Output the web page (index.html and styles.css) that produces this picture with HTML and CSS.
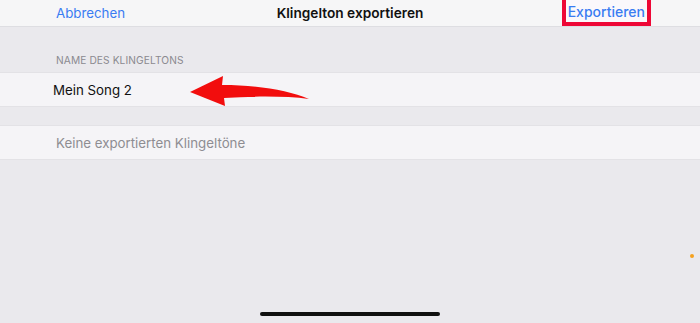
FILE: index.html
```html
<!DOCTYPE html>
<html lang="de">
<head>
<meta charset="utf-8">
<link rel="stylesheet" href="styles.css">
</head>
<body>
<div class="screen">
  <header class="nav">
    <span class="nav-btn left">Abbrechen</span>
    <span class="nav-title">Klingelton exportieren</span>
    <span class="nav-btn right"><span class="highlight">Exportieren</span></span>
  </header>
  <div class="section-header">NAME DES KLINGELTONS</div>
  <div class="row name-row">
    <span class="row-text">Mein Song 2</span>
    <svg class="arrow" width="130" height="36" viewBox="185 72 130 36">
      <path d="M190,91 L223,75 L222,84 C258,84 288,89 309,98 C286,95 256,95 224,97 L225,105 Z" fill="#f20d0d"/>
    </svg>
  </div>
  <div class="spacer"></div>
  <div class="row empty-row">
    <span class="row-text muted">Keine exportierten Klingeltöne</span>
  </div>
  <div class="bottom">
    <div class="home-indicator"></div>
  </div>
  <div class="dot"></div>
</div>
</body>
</html>
```
FILE: styles.css
```css
html, body {
  margin: 0;
  padding: 0;
}
body {
  background: #eae9ed;
  font-family: Inter, "Liberation Sans", sans-serif;
}
.screen {
  position: relative;
  width: 700px;
  height: 323px;
  display: flex;
  flex-direction: column;
  overflow: hidden;
}
.nav {
  height: 26px;
  background: #f6f6f7;
  border-bottom: 1px solid #dedee2;
  display: grid;
  grid-template-columns: 1fr auto 1fr;
  align-items: center;
  font-size: 14px;
}
.nav-btn {
  color: #3a7cf2;
}
.nav-btn.left {
  padding-left: 56px;
  font-size: 13.3px;
}
.nav-btn.right {
  justify-self: end;
  padding-right: 49px;
  align-self: stretch;
  display: flex;
  font-weight: 500;
}
.highlight {
  display: flex;
  align-items: center;
  padding: 0 2px 0 2px;
  border: 4px solid #ee0736;
  border-top-width: 0;
  background: #fbf8fb;
}
.nav-title {
  font-weight: 600;
  color: #111;
  font-size: 13.7px;
}
.section-header {
  height: 45px;
  box-sizing: border-box;
  padding: 27px 0 0 56px;
  font-size: 10.2px;
  color: #8b8a90;
  letter-spacing: 0.1px;
}
.row {
  position: relative;
  height: 35px;
  background: #f5f4f7;
  border-top: 1px solid #e3e2e6;
  border-bottom: 1px solid #e3e2e6;
  display: flex;
  align-items: center;
  box-sizing: border-box;
}
.name-row .row-text {
  padding-left: 53px;
  font-size: 13.3px;
  color: #111;
}
.empty-row .row-text {
  padding-left: 56px;
  font-size: 13.3px;
}
.muted {
  color: #8e8d92;
}
.spacer {
  height: 18px;
}
.arrow {
  position: absolute;
  left: 185px;
  top: 0;
}
.bottom {
  margin-top: auto;
  display: flex;
  justify-content: center;
  padding-bottom: 7px;
}
.home-indicator {
  width: 180px;
  height: 4px;
  border-radius: 2px;
  background: #101010;
}
.dot {
  position: absolute;
  left: 690px;
  top: 254px;
  width: 4px;
  height: 4px;
  border-radius: 50%;
  background: #f5a11e;
}
```
